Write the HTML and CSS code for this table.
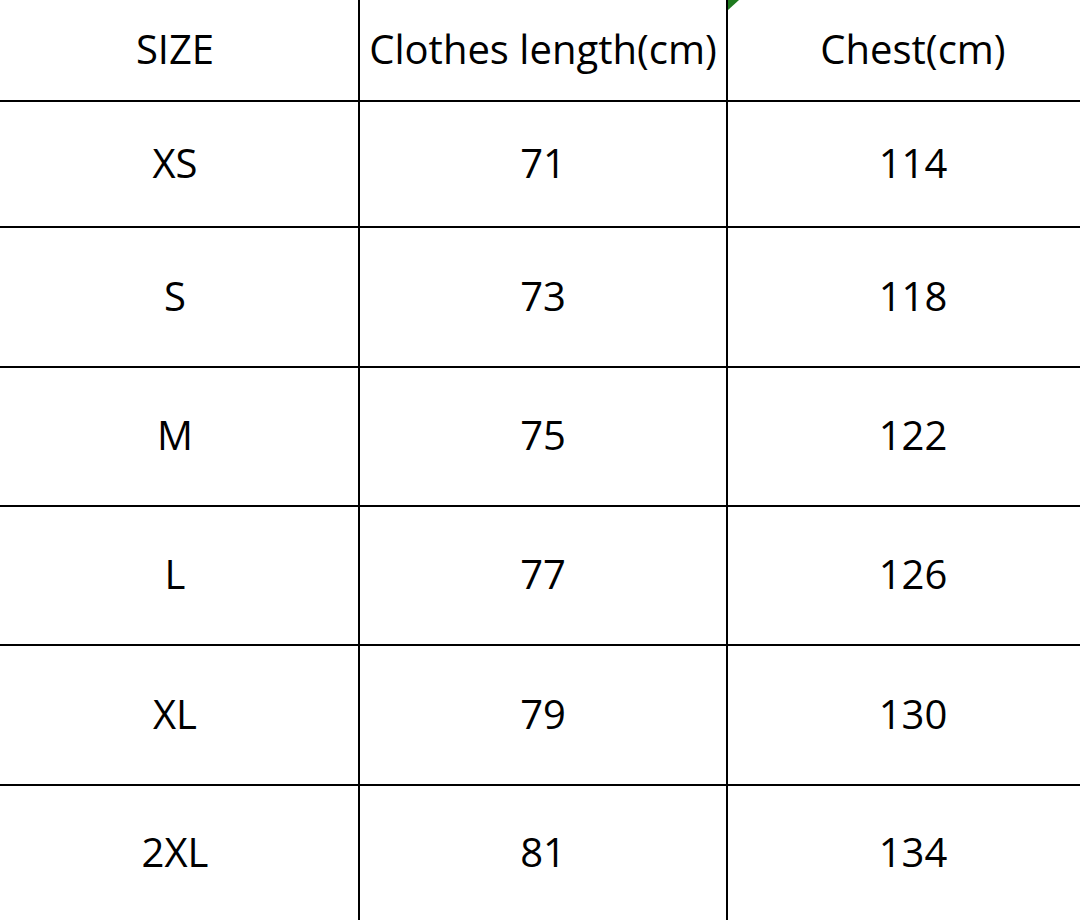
FILE: index.html
```html
<!DOCTYPE html>
<html lang="en">
<head>
<meta charset="utf-8">
<title>Size chart</title>
<link rel="stylesheet" href="styles.css">
</head>
<body>
<div class="sheet">
  <div class="grid">
    <div class="cell">SIZE</div>
    <div class="cell">Clothes length(cm)</div>
    <div class="cell last-col flagged"><span class="flag"></span>Chest(cm)</div>

    <div class="cell">XS</div>
    <div class="cell">71</div>
    <div class="cell last-col">114</div>

    <div class="cell">S</div>
    <div class="cell">73</div>
    <div class="cell last-col">118</div>

    <div class="cell">M</div>
    <div class="cell">75</div>
    <div class="cell last-col">122</div>

    <div class="cell">L</div>
    <div class="cell">77</div>
    <div class="cell last-col">126</div>

    <div class="cell">XL</div>
    <div class="cell">79</div>
    <div class="cell last-col">130</div>

    <div class="cell last-row">2XL</div>
    <div class="cell last-row">81</div>
    <div class="cell last-col last-row">134</div>
  </div>
</div>
</body>
</html>
```
FILE: styles.css
```css
html, body {
  margin: 0;
  padding: 0;
  background: #ffffff;
}

body {
  width: 1080px;
  height: 920px;
  overflow: hidden;
  font-family: "Open Sans", "Noto Sans", "Liberation Sans", sans-serif;
  color: #000000;
}

.sheet {
  width: 1080px;
  height: 920px;
  overflow: hidden;
}

.grid {
  display: grid;
  grid-template-columns: 368px 368px 370px;
  grid-template-rows: 102px 126px 140px 139px 139px 140px 134px;
  margin-left: -8px;
  width: 1106px;
}

.cell {
  box-sizing: border-box;
  display: flex;
  align-items: center;
  justify-content: center;
  border-right: 2px solid #000000;
  border-bottom: 2px solid #000000;
  font-size: 40px;
  line-height: 1;
  white-space: nowrap;
  padding-bottom: 3px;
}

.last-col {
  border-right: none;
}

.last-row {
  border-bottom: none;
}

.flagged {
  position: relative;
}

.flag {
  position: absolute;
  left: 0;
  top: 0;
  width: 0;
  height: 0;
  border-top: 10px solid #1f7a1f;
  border-right: 11px solid transparent;
}
```
